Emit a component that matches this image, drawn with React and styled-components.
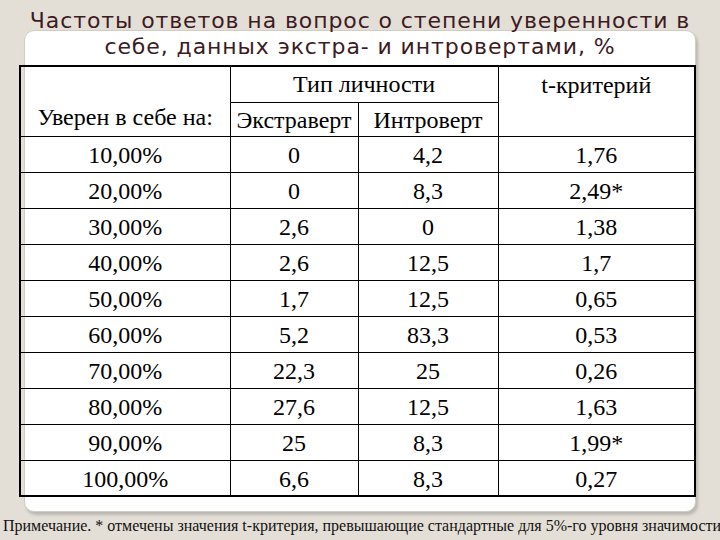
import React from 'react';
import styled, {createGlobalStyle} from 'styled-components';

// ----------------- Style -----------------

const GlobalStyle = createGlobalStyle`
    html, body {
        margin: 0;
        padding: 0;
        background: #e3dfd7;
    }
    body {
        width: 720px;
        height: 540px;
        overflow: hidden;
    }
`

const serif = `"Liberation Serif", "Times New Roman", serif`;

const Page = styled.div`
    display: flex;
    flex-direction: column;
    padding-top: 30px;
`

const Card = styled.div`
    margin-left: 24px;
    width: 670px;
    height: 480px;
    background: #fff;
    border: 1px solid #d2cdc4;
    border-radius: 10px;
    box-shadow: 2px 3px 3px rgba(0, 0, 0, 0.18);
    display: flex;
    flex-direction: column;
`

const Title = styled.h1`
    margin: -23px 0 0 0;
    font-family: "DejaVu Sans", Verdana, sans-serif;
    font-weight: normal;
    font-size: 22px;
    letter-spacing: 0.9px;
    line-height: 26px;
    color: #3d1b22;
    text-align: center;
    white-space: nowrap;
`

const Table = styled.table`
    margin: 5px -1px 0 -6px;
    width: 675px;
    border-collapse: collapse;
    border: 2px solid #000;
    font-family: ${serif};
    font-size: 24px;
    color: #000;
    table-layout: fixed;
`

const HeadCell = styled.th`
    box-sizing: border-box;
    font-family: ${serif};
    font-weight: normal;
    border: 1px solid #000;
    height: ${p => p.$h || 34}px;
    vertical-align: ${p => p.$align || 'middle'};
    text-align: center;
    white-space: nowrap;
    padding: ${p => p.$pt || 0}px 0 ${p => p.$pb || 0}px 0;
`

const Cell = styled.td`
    box-sizing: border-box;
    font-family: ${serif};
    border: 1px solid #000;
    padding: 3px 0 0 0;
    height: 36px;
    text-align: center;
    vertical-align: middle;
    white-space: nowrap;
`

const Note = styled.p`
    margin: 4px 0 0 3px;
    font-family: ${serif};
    font-size: 16px;
    line-height: 20px;
    color: #111;
    white-space: nowrap;
`

// ----------------- Data -----------------

const rows = [
    ['10,00%', '0', '4,2', '1,76'],
    ['20,00%', '0', '8,3', '2,49*'],
    ['30,00%', '2,6', '0', '1,38'],
    ['40,00%', '2,6', '12,5', '1,7'],
    ['50,00%', '1,7', '12,5', '0,65'],
    ['60,00%', '5,2', '83,3', '0,53'],
    ['70,00%', '22,3', '25', '0,26'],
    ['80,00%', '27,6', '12,5', '1,63'],
    ['90,00%', '25', '8,3', '1,99*'],
    ['100,00%', '6,6', '8,3', '0,27'],
];

// ----------------- App -----------------

export default function App() {
    return (
        <>
            <GlobalStyle/>
            <Page>
                <Card>
                    <Title>
                        Частоты ответов на вопрос о степени уверенности в<br/>
                        себе, данных экстра- и интровертами, %
                    </Title>
                    <Table>
                        <colgroup>
                            <col style={{width: 210}}/>
                            <col style={{width: 128}}/>
                            <col style={{width: 140}}/>
                            <col style={{width: 197}}/>
                        </colgroup>
                        <thead>
                            <tr>
                                <HeadCell rowSpan={2} $align="bottom" $pb={5}>Уверен в себе на:</HeadCell>
                                <HeadCell colSpan={2} $h={36}>Тип личности</HeadCell>
                                <HeadCell rowSpan={2} $align="top" $pt={5}>t-критерий</HeadCell>
                            </tr>
                            <tr>
                                <HeadCell $h={34} $pt={3}>Экстраверт</HeadCell>
                                <HeadCell $h={34} $pt={3}>Интроверт</HeadCell>
                            </tr>
                        </thead>
                        <tbody>
                            {rows.map(r => (
                                <tr key={r[0]}>
                                    {r.map((v, i) => <Cell key={i}>{v}</Cell>)}
                                </tr>
                            ))}
                        </tbody>
                    </Table>
                </Card>
                <Note>Примечание. * отмечены значения t-критерия, превышающие стандартные для 5%-го уровня значимости</Note>
            </Page>
        </>
    );
}
